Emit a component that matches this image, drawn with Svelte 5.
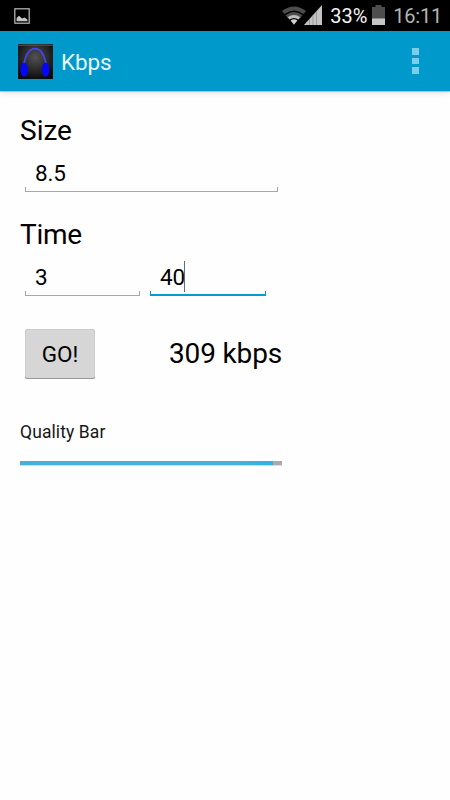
<script lang="ts">
  let size = $state("8.5");
  let minutes = $state("3");
  let seconds = $state("40");
  let bitrate = $state(309);

  const MAX_KBPS = 320;
  let quality = $derived((bitrate / MAX_KBPS) * 100);

  function calculate() {
    const total = Number(minutes) * 60 + Number(seconds);
    if (total > 0) {
      bitrate = Math.floor((Number(size) * 8000) / total);
    }
  }
</script>

<div class="screen">
  <header class="status-bar">
    <svg class="picture" width="16" height="16" viewBox="0 0 16 16">
      <rect x="0.8" y="0.8" width="14.4" height="14.4" fill="none" stroke="#bdbdbd" stroke-width="1.2" />
      <path d="M2.6 13.2V10L5 7.8L7 9.5L8 10.5L10.5 9.5L13.4 11.5V13.2Z" fill="#c4c4c4" />
    </svg>
    <div class="indicators">
      <svg class="wifi" width="24" height="19" viewBox="0 0 24 19">
        <path d="M0 5Q12-4 24 5L21.6 8Q12 1 2.4 8Z" fill="#4c4c4c" />
        <path d="M3.5 9.2Q12 2.8 20.5 9.2L18.2 12Q12 7.4 5.8 12Z" fill="#4c4c4c" />
        <path d="M5.6 11.2Q12 6.8 18.4 11.2L16.4 13.4Q12 10.4 7.6 13.4Z" fill="#bdbdbd" />
        <path d="M8.6 14.6Q12 12 15.4 14.6L12 18.7Z" fill="#d0d0d0" />
      </svg>
      <svg class="signal" width="18" height="20" viewBox="0 0 18 20">
        <path d="M0 20L18 0V20Z" fill="#c4c4c4" />
        <path d="M5.5 14V20M9 10V20M12.5 6V20" stroke="#8a8a8a" stroke-width="0.7" />
      </svg>
      <span class="percent">33%</span>
      <svg class="battery" width="13" height="20" viewBox="0 0 13 20">
        <path d="M3.5 0H9.5V2H13V20H0V2H3.5Z" fill="#4d4d4d" />
        <rect y="13.5" width="13" height="6.5" fill="#c6c6c6" />
      </svg>
      <span class="clock">16:11</span>
    </div>
  </header>

  <div class="action-bar">
    <svg class="logo" width="35" height="35" viewBox="0 0 35 35">
      <defs>
        <radialGradient id="logo-bg" cx="0.5" cy="0.38" r="0.65">
          <stop offset="0" stop-color="#525252" />
          <stop offset="1" stop-color="#0a0a0a" />
        </radialGradient>
      </defs>
      <rect width="35" height="35" fill="url(#logo-bg)" />
      <path d="M0 1.2H35" stroke="#5c5c5c" />
      <path d="M5.5 22C7.5 11 11 4.7 17 4.7S26.5 11 28.5 22" fill="none" stroke="#4744f2" stroke-width="1.7" />
      <ellipse cx="6.2" cy="25.8" rx="3.8" ry="7" fill="#0505fa" />
      <ellipse cx="27.6" cy="25.8" rx="3.8" ry="7" fill="#0505fa" />
    </svg>
    <h1>Kbps</h1>
    <button class="overflow" aria-label="More options">
      <span></span>
      <span></span>
      <span></span>
    </button>
  </div>

  <main>
    <div class="label">Size</div>
    <div class="fields">
      <div class="field wide"><span>{size}</span></div>
    </div>

    <div class="label time">Time</div>
    <div class="fields">
      <div class="field minutes"><span>{minutes}</span></div>
      <div class="field focused"><span>{seconds}</span><i class="caret"></i></div>
    </div>

    <div class="result">
      <button class="go" onclick={calculate}>GO!</button>
      <span class="bitrate">{bitrate} kbps</span>
    </div>

    <div class="caption">Quality Bar</div>
    <div class="progress">
      <div class="progress-fill" style="width: {quality}%"></div>
    </div>
  </main>
</div>

<style>
  :global(body) {
    background: #fff;
  }
  .screen {
    height: 800px;
    display: flex;
    flex-direction: column;
    background: #fefefe;
    color: #000;
    font-family: Roboto, "Noto Sans", sans-serif;
    overflow: hidden;
  }
  button {
    border: 0;
    padding: 0;
    background: none;
    font: inherit;
    color: inherit;
  }
  .status-bar {
    box-sizing: border-box;
    height: 31px;
    flex: none;
    display: flex;
    align-items: center;
    justify-content: space-between;
    padding: 0 8px 0 14px;
    background: #000;
  }
  .indicators {
    display: flex;
    align-items: center;
  }
  .signal {
    margin-left: -2px;
    margin-bottom: 1px;
  }
  .percent {
    margin-left: 8px;
    width: 38px;
    color: #f5f5f5;
    font-size: 20px;
    line-height: 30px;
    padding-top: 1px;
    white-space: nowrap;
  }
  .battery {
    margin-left: 4px;
    margin-bottom: 1px;
  }
  .clock {
    margin-left: 8px;
    padding-top: 1px;
    color: #b5b5b5;
    font-size: 20px;
    line-height: 30px;
    letter-spacing: -0.2px;
  }
  .action-bar {
    box-sizing: border-box;
    height: 60px;
    flex: none;
    display: flex;
    align-items: center;
    padding: 0 31px 0 18px;
    background: #0099cc;
    box-shadow: 0 1px 1px rgba(0, 0, 0, 0.2), 0 3px 6px rgba(0, 0, 0, 0.08);
  }
  h1 {
    flex: 1;
    margin: 2px 0 0 8px;
    color: #e8f5fb;
    font-size: 22.5px;
    font-weight: 400;
    letter-spacing: -0.1px;
  }
  .overflow {
    display: flex;
    flex-direction: column;
    gap: 3px;
  }
  .overflow span {
    width: 7px;
    height: 6.4px;
    background: #80cce6;
  }
  main {
    width: 262px;
    padding: 24px 0 0 20px;
  }
  .label {
    font-size: 28px;
    line-height: 32px;
  }
  .label.time {
    letter-spacing: -0.3px;
  }
  .fields {
    display: flex;
    gap: 10px;
    padding-left: 5px;
    margin-bottom: 27px;
  }
  .field {
    position: relative;
    box-sizing: border-box;
    flex: none;
    width: 116px;
    height: 45px;
    display: flex;
    align-items: flex-start;
    padding: 8px 10px 0;
    font-size: 22.5px;
    line-height: 36px;
    letter-spacing: -0.2px;
  }
  .field.wide {
    width: 253px;
  }
  .field.minutes {
    width: 115px;
  }
  /* shallow tray under the text */
  .field::after {
    content: "";
    position: absolute;
    left: 0;
    right: 0;
    bottom: 0;
    height: 4px;
    border: 1px solid #a8a8a8;
    border-top: 0;
  }
  .field.focused::after {
    height: 3px;
    border: 2px solid #0a99cf;
    border-width: 0 1.5px 2px;
  }
  .caret {
    width: 1px;
    height: 31px;
    margin-top: 2px;
    margin-left: -1px;
    background: #6b6b6b;
  }
  .result {
    display: flex;
    align-items: center;
    padding: 6px 0 0 5px;
  }
  .go {
    flex: none;
    width: 70px;
    height: 50px;
    border-radius: 2px;
    background: #d6d6d6;
    box-shadow: inset 0 -1px #989898, inset 0 0 0 1px #cbcbcb;
    font-size: 22.5px;
  }
  .bitrate {
    margin-left: 74px;
    padding-bottom: 1px;
    font-size: 28px;
    line-height: 48px;
    letter-spacing: -0.15px;
    white-space: nowrap;
  }
  .caption {
    margin-top: 42px;
    padding-top: 1px;
    font-size: 17.5px;
    line-height: 21px;
    letter-spacing: 0.1px;
    color: #161616;
  }
  .progress {
    margin-top: 18px;
    height: 4px;
    border-bottom: 1px solid #dcdcdc;
    background: #aaa;
  }
  .progress-fill {
    height: 4px;
    background: linear-gradient(90deg, #45b0dc 88%, #2bb3ea);
  }
</style>
